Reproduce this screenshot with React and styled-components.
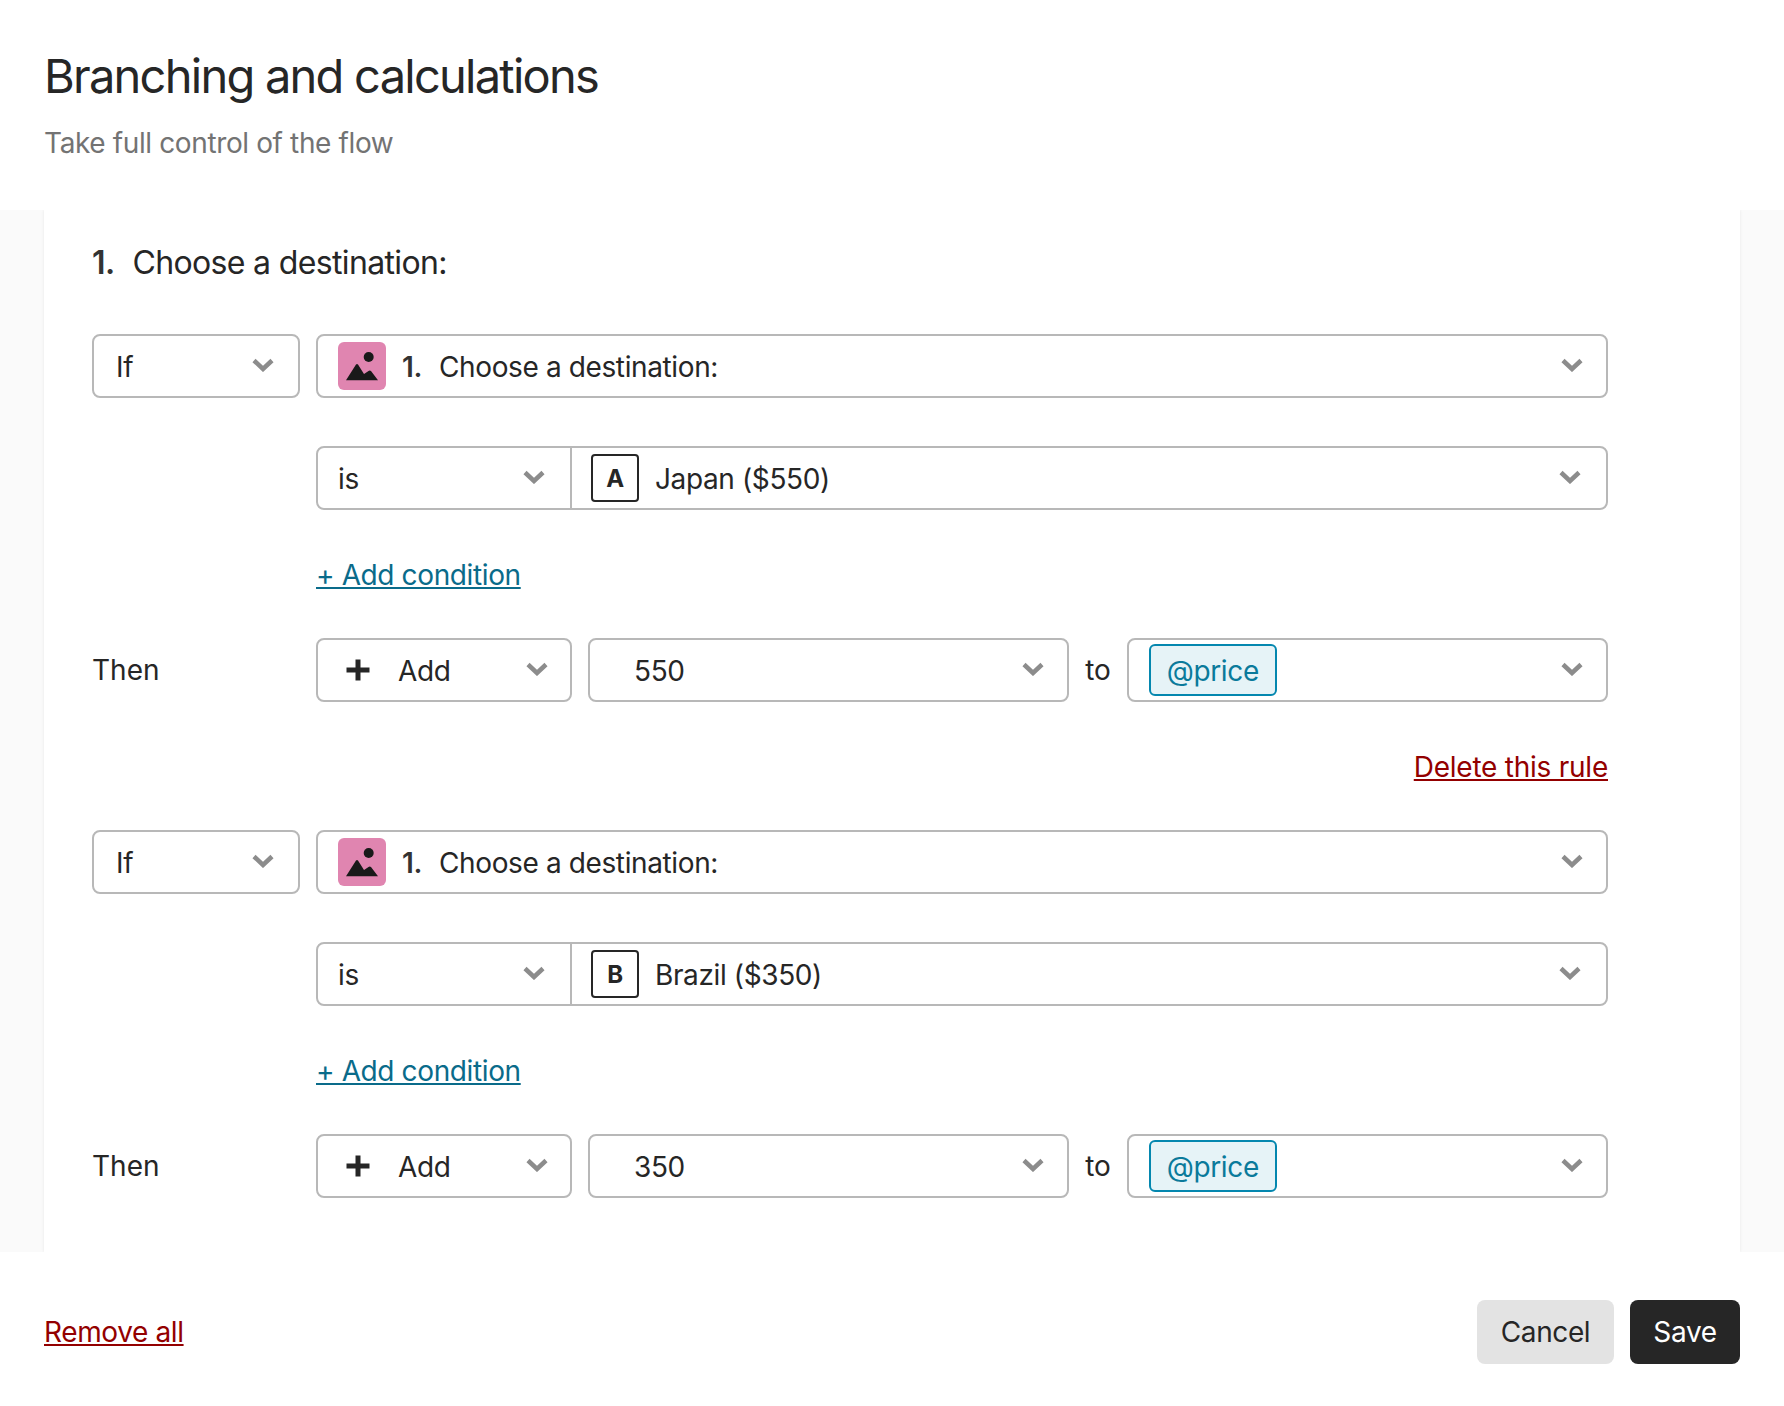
import React from 'react';
import styled, { createGlobalStyle } from 'styled-components';

const GlobalStyle = createGlobalStyle`
  html, body {
    margin: 0;
    padding: 0;
    background: #fff;
  }
  body {
    font-family: Inter, "Liberation Sans", sans-serif;
    font-size: 28px;
    letter-spacing: -0.38px;
    color: #262626;
  }
`;

const rules = [
  { letter: 'A', answer: 'Japan ($550)', amount: '550' },
  { letter: 'B', answer: 'Brazil ($350)', amount: '350' },
];

const Chevron = () => (
  <ChevronIcon viewBox="0 0 22 14" fill="none">
    <path d="M2 2.500 L11 11 L20 2.500" stroke="#8c8c8c" strokeWidth="4.500" />
  </ChevronIcon>
);

const PictureIcon = () => (
  <PinkBox>
    <svg width="48" height="48" viewBox="0 0 48 48" fill="#191919">
      <circle cx="30.700" cy="15" r="5" />
      <path d="M8 38.300 L18 22.500 Q19 21.500 20 22.500 L26 32 L30.500 29 Q31.700 28 33 29 L40 38.300 Z" />
    </svg>
  </PinkBox>
);

const PlusIcon = () => (
  <PlusSvg viewBox="0 0 24 24" fill="none">
    <path d="M12 1.500 V22.500 M0.500 12 H23.500" stroke="#262626" strokeWidth="5" />
  </PlusSvg>
);

const Rule = ({ letter, answer, amount, last }) => (
  <RuleBlock>
    <Row>
      <Field $pad={22}>
        <Value>If</Value>
        <Chevron />
      </Field>
      <Field $pad={20} $end={23}>
        <PictureIcon />
        <Number>1.</Number>
        <Value>Choose a destination:</Value>
        <Chevron />
      </Field>
    </Row>
    <Row>
      <Spacer />
      <JoinedField>
        <JoinedPart $width={254} $pad={20}>
          <Value>is</Value>
          <Chevron />
        </JoinedPart>
        <JoinedPart $pad={19}>
          <LetterBox>{letter}</LetterBox>
          <Value>{answer}</Value>
          <Chevron />
        </JoinedPart>
      </JoinedField>
    </Row>
    <ConditionRow>
      <BlueLink href="#">+ Add condition</BlueLink>
    </ConditionRow>
    <Row>
      <RowLabel>Then</RowLabel>
      <ThenFields>
        <Field $pad={28} $end={22}>
          <PlusIcon />
          <AddLabel>Add</AddLabel>
          <Chevron />
        </Field>
        <Field $pad={44} $end={23}>
          <Value>{amount}</Value>
          <Chevron />
        </Field>
        <ToLabel>to</ToLabel>
        <Field $pad={20} $end={23}>
          <Tag>@price</Tag>
          <Chevron />
        </Field>
      </ThenFields>
    </Row>
    {!last && (
      <DeleteRow>
        <DeleteLink href="#">Delete this rule</DeleteLink>
      </DeleteRow>
    )}
  </RuleBlock>
);

const App = () => (
  <Modal>
    <GlobalStyle />
    <Header>
      <Title>Branching and calculations</Title>
      <Subtitle>Take full control of the flow</Subtitle>
    </Header>
    <ScrollArea>
      <Panel>
        <Question>
          <QuestionNumber>1.</QuestionNumber>
          <span>Choose a destination:</span>
        </Question>
        {rules.map((rule, i) => (
          <Rule key={rule.letter} {...rule} last={i === rules.length - 1} />
        ))}
      </Panel>
    </ScrollArea>
    <Footer>
      <RedLink href="#">Remove all</RedLink>
      <Buttons>
        <CancelButton>Cancel</CancelButton>
        <SaveButton>Save</SaveButton>
      </Buttons>
    </Footer>
  </Modal>
);

const Modal = styled.div`
  width: 1784px;
  height: 1406px;
  display: flex;
  flex-direction: column;
  background: #fff;
`;

const Header = styled.header`
  height: 210px;
  box-sizing: border-box;
  padding: 44px 44px 0;
`;

const Title = styled.h1`
  margin: 0;
  font-size: 47px;
  line-height: 64px;
  font-weight: 400;
  letter-spacing: -1.75px;
  color: #262626;
`;

const Subtitle = styled.p`
  margin: 15px 0 0;
  font-size: 28px;
  line-height: 40px;
  color: #737373;
`;

const ScrollArea = styled.div`
  height: 1042px;
  box-sizing: border-box;
  padding: 0 44px;
  background: #fafafa;
  overflow: hidden;
`;

const Panel = styled.div`
  height: 100%;
  box-sizing: border-box;
  padding: 32px 132px 0 48px;
  background: #fff;
  box-shadow: 0 0 3px rgba(0, 0, 0, 0.08);
`;

const Question = styled.div`
  display: flex;
  align-items: center;
  height: 40px;
  margin-bottom: 52px;
  font-size: 32px;
  letter-spacing: -0.65px;
`;

const RuleBlock = styled.div`
  display: flex;
  flex-direction: column;
`;

const Row = styled.div`
  display: grid;
  grid-template-columns: 208px 1fr;
  column-gap: 16px;
  align-items: center;
  margin-bottom: 48px;

  &:nth-child(4) {
    margin-bottom: 0;
  }
`;

const Spacer = styled.div``;

const RowLabel = styled.div`
  font-size: 28px;
  letter-spacing: 0;
`;

const ConditionRow = styled.div`
  padding-left: 224px;
  height: 64px;
  margin: -15px 0 31px;
  display: flex;
  align-items: center;
`;

const ThenFields = styled.div`
  display: grid;
  grid-template-columns: 256px 1fr auto 1fr;
  column-gap: 16px;
  align-items: center;
`;

const Field = styled.div`
  display: flex;
  align-items: center;
  height: 64px;
  box-sizing: border-box;
  padding: 0 ${(p) => p.$end || 24}px 0 ${(p) => p.$pad}px;
  border: 2px solid #b8b8b8;
  border-radius: 8px;
  background: #fff;
`;

const JoinedField = styled.div`
  display: flex;
  height: 64px;
  box-sizing: border-box;
  border: 2px solid #b8b8b8;
  border-radius: 8px;
  background: #fff;
`;

const JoinedPart = styled.div`
  display: flex;
  align-items: center;
  box-sizing: border-box;
  padding: 0 25px 0 ${(p) => p.$pad}px;
  ${(p) => (p.$width ? `width: ${p.$width}px; flex: none; border-right: 2px solid #b8b8b8;` : 'flex: 1;')}
`;

const Value = styled.span`
  padding-top: 1px;
  font-size: 28px;
  white-space: nowrap;
`;

const Number = styled.span`
  padding-top: 1px;
  font-weight: 600;
  margin-right: 17px;
  color: #333;
`;

const QuestionNumber = styled(Number)`
  margin-right: 18px;
`;

const ChevronIcon = styled.svg`
  width: 22px;
  height: 14px;
  margin: -2px 0 0 auto;
  flex: none;
`;

const PinkBox = styled.span`
  width: 48px;
  height: 48px;
  flex: none;
  margin-right: 16px;
  border-radius: 6px;
  background: #e085b0;
`;

const PlusSvg = styled.svg`
  width: 24px;
  height: 24px;
  flex: none;
`;

const AddLabel = styled(Value)`
  margin-left: 28px;
`;

const LetterBox = styled.span`
  width: 48px;
  height: 48px;
  flex: none;
  margin-right: 16px;
  box-sizing: border-box;
  display: flex;
  align-items: center;
  justify-content: center;
  border: 2px solid #262626;
  border-radius: 4px;
  font-size: 24px;
  font-weight: 700;
`;

const ToLabel = styled.span`
  font-size: 28px;
  letter-spacing: 0;
`;

const Tag = styled.span`
  height: 52px;
  box-sizing: border-box;
  display: flex;
  align-items: center;
  padding: 2px 16px 0;
  border: 2px solid #0487af;
  border-radius: 6px;
  background: #e6f3f7;
  color: #0a7a9b;
  font-size: 28px;
`;

const BlueLink = styled.a`
  color: #0a6b8a;
  font-size: 28px;
  text-decoration: underline;
  text-decoration-thickness: 2px;
  text-underline-offset: 2px;
`;

const RedLink = styled.a`
  color: #930000;
  font-size: 28px;
  text-decoration: underline;
  text-decoration-thickness: 2px;
  text-underline-offset: 2px;
`;

const DeleteLink = styled(RedLink)`
  letter-spacing: -0.24px;
`;

const DeleteRow = styled.div`
  display: flex;
  justify-content: flex-end;
  align-items: center;
  height: 40px;
  margin: 45px 0 43px;
`;

const Footer = styled.footer`
  flex: 1;
  display: flex;
  align-items: flex-start;
  justify-content: space-between;
  padding: 48px 44px 0;

  > a {
    margin-top: 15px;
  }
`;

const Buttons = styled.div`
  display: flex;
  gap: 16px;
`;

const CancelButton = styled.button`
  height: 64px;
  width: 137px;
  border: none;
  border-radius: 8px;
  background: #e3e3e3;
  color: #262626;
  font-family: inherit;
  font-size: 28px;
  letter-spacing: inherit;
`;

const SaveButton = styled(CancelButton)`
  width: 110px;
  background: #262626;
  color: #fff;
`;

export default App;
